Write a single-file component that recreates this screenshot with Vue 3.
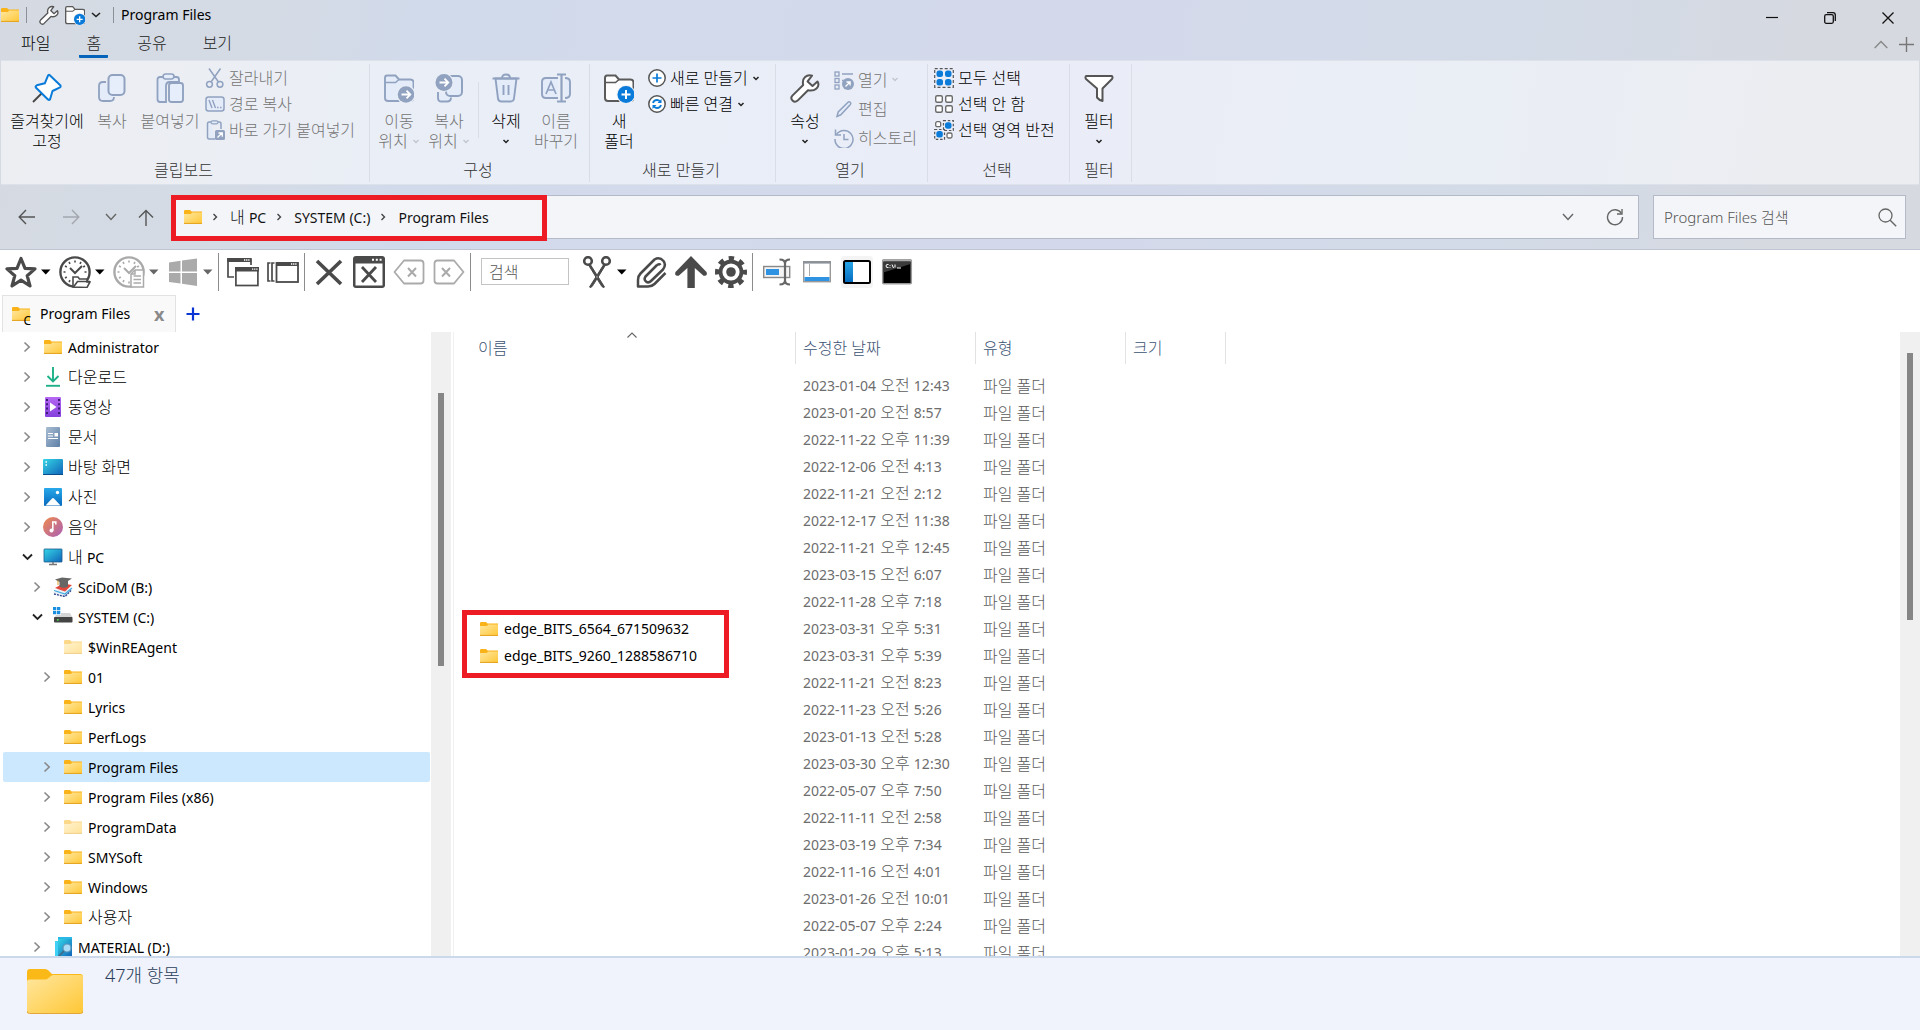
<script setup>
import { h, ref } from 'vue'

const FOLDER =
  '<path d="M0 2.2Q0 1 1.2 1H6l1.6 1.6H18V6H0z" fill="#f9b218"/><path d="M0 5h7l1-1.4h10V14q0 1-1 1H1q-1 0-1-1z" fill="url(#gFolder)"/><path d="M0 14.4h18" stroke="#e3a11f" stroke-width="1"/>'
const WRENCH =
  '<path d="M27.5 8.5 22.5 13 17.6 8.4 22 2.6C17 1 11.5 5 13.2 12L2.4 22.6C-.6 26 4 30.800 7.600 27.600L18 17.200C25 19 30.500 13.500 27.500 8.500z" fill="#fff" stroke="#555" stroke-width="2" stroke-linejoin="round"/>'
const CLOCK = (c) =>
  `<circle cx="16" cy="16" r="14.600" fill="none" stroke="${c}" stroke-width="2.400"/><path d="M16 4.500v2M16 25.500v2M4.500 16h2M25.500 16h2M10 6l1 1.800M22 6l-1 1.800M6 10l1.800 1M26 10l-1.800 1M6 22l1.800-1M10 26l1-1.800" stroke="${c}" stroke-width="1.600"/><path d="M11 12l5 5 7-7" fill="none" stroke="${c}" stroke-width="2"/>`
const NEWFOLDER =
  '<path d="M3 2.500h8.500l3.500 4h11.500q3 0 3 3V25q0 3-3 3H4q-3 0-3-3V5q0-2.500 2-2.500z" fill="#fdfdfd" stroke="#5a5a5a" stroke-width="2"/><path d="M1 9.500h10.500l3.500-3" fill="none" stroke="#5a5a5a" stroke-width="1.600"/><circle cx="22" cy="21.500" r="9.500" fill="#edf0f7"/><circle cx="22" cy="21.500" r="8.500" fill="#0a7bd8"/><path d="M22 17v9M17.500 21.500h9" stroke="#fff" stroke-width="2"/>'

const icons = {
  folder: [18, 16, FOLDER],
  folderPale: [18, 16, `<g opacity=".5">${FOLDER}</g>`],
  folderBig: [56, 45, '<path d="M0 3Q0 0 3 0h15q2 0 3.500 1.500L25 5h28q3 0 3 3v8H0z" fill="#fbb917"/><path d="M0 13q0-2.500 2.500-2.500H18q2 0 3.500-1.500L24 7q1-1 2.500-1H54q2 0 2 2v34q0 2.500-2.500 2.500h-51Q0 44.500 0 42z" fill="url(#gFolder)"/><path d="M0 42q0 2.500 2.500 2.500h51Q56 44.500 56 42" fill="none" stroke="#e3a63a" stroke-width="1"/>'],
  wrenchS: [30, 30, WRENCH],
  newFolder: [30, 30, NEWFOLDER],
  chevS: [8, 5, '<path d="M1.500 1l2.500 2.500L6.500 1" fill="none" stroke="#222" stroke-width="1.500"/>'],
  chevPale: [8, 5, '<path d="M1.500 1l2.500 2.500L6.500 1" fill="none" stroke="#c3c6cc" stroke-width="1.400"/>'],
  chevTitle: [10, 6, '<path d="M1 1l4 3.500L9 1" fill="none" stroke="#222" stroke-width="1.600"/>'],
  min: [12, 12, '<path d="M0 5.500h12" stroke="#111" stroke-width="1.200"/>'],
  restore: [12, 12, '<rect x=".7" y="2.700" width="8.600" height="8.600" rx="1.500" fill="none" stroke="#111" stroke-width="1.300"/><path d="M3 .7h6Q11.300.7 11.300 3v6" fill="none" stroke="#111" stroke-width="1.300"/>'],
  close: [12, 12, '<path d="M.5.5l11 11M11.500.5l-11 11" stroke="#111" stroke-width="1.300"/>'],
  caretUp: [14, 9, '<path d="M.7 8 7 1.500 13.300 8" fill="none" stroke="#888" stroke-width="1.400"/>'],
  plusThin: [15, 15, '<path d="M7.500 0v15M0 7.500h15" stroke="#777" stroke-width="1.400"/>'],
  pin: [30, 30, '<path d="M10.500 19.500 1 29" stroke="#444" stroke-width="1.800"/><path d="M17.500 2 28.500 12.500q.6 2-1.500 2.300l-6.500 3.200-2.500 8.500q-1 .8-2 0L3.800 14.500q-.6-1.500 1-2.200l8-2L16 2.600q.7-1.200 1.500-.6z" fill="#fff" stroke="#0a7bd8" stroke-width="2" stroke-linejoin="round"/>'],
  copy: [28, 30, '<path d="M8 9H5Q1 9 1 13v11q0 4 4 4h7q4 0 4-4" fill="#e4ebf9" stroke="#90a2c0" stroke-width="1.800"/><rect x="10.500" y="2" width="16" height="20" rx="4" fill="#e7eefb" stroke="#90a2c0" stroke-width="2"/>'],
  paste: [28, 30, '<path d="M9 4H4Q1.500 4 1.500 6.500V26Q1.500 29 4 29h6V13q0-3.500 3-4h10V6.500Q23 4 20.500 4H16" fill="#e4ebf9" stroke="#90a2c0" stroke-width="1.800"/><rect x="7" y="1" width="11" height="5" rx="2.500" fill="#e7eefb" stroke="#90a2c0" stroke-width="1.700"/><rect x="13" y="10" width="14" height="19" rx="2.500" fill="#e7eefb" stroke="#90a2c0" stroke-width="1.900"/>'],
  cut: [20, 20, '<path d="M4 .5 13.500 14M15.500.5 6 14" stroke="#90a2c0" stroke-width="1.500"/><circle cx="4.500" cy="16.300" r="2.900" fill="none" stroke="#90a2c0" stroke-width="1.500"/><circle cx="15" cy="16.300" r="2.900" fill="none" stroke="#90a2c0" stroke-width="1.500"/>'],
  path: [20, 20, '<rect x="1" y="3" width="18" height="14" rx="2.500" fill="#e4ebf9" stroke="#90a2c0" stroke-width="1.500"/><path d="M4 6l3 8M7.500 6l3 8M12 13.500h1.500M15 13.500h1.500" stroke="#90a2c0" stroke-width="1.400"/>'],
  shortcut: [20, 20, '<path d="M6 2H4Q2.500 2 2.500 4v13q0 2 1.500 2h6M13 2h1.500Q16 2 16 4v5" fill="#e4ebf9" stroke="#90a2c0" stroke-width="1.500"/><rect x="6" y=".8" width="7" height="3" rx="1.500" fill="#e4ebf9" stroke="#90a2c0" stroke-width="1.200"/><rect x="10" y="10" width="10" height="10" rx="1.500" fill="#90a2c0"/><path d="M12.500 17.500l4.500-4.500M13.500 13h3.800v3.800" stroke="#fff" stroke-width="1.300" fill="none"/>'],
  moveTo: [30, 30, '<path d="M3 2.500h8.500l3.500 4h11.500q3 0 3 3V25q0 3-3 3H4q-3 0-3-3V5q0-2.500 2-2.500z" fill="#e4ebf9" stroke="#90a2c0" stroke-width="1.900"/><path d="M1 9.500h10.500l3.500-3" fill="none" stroke="#90a2c0" stroke-width="1.500"/><circle cx="22" cy="21.500" r="9.500" fill="#eaeef6"/><circle cx="22" cy="21.500" r="8.300" fill="#90a2c0"/><path d="M17.500 21.500h8.500M22.500 17.700l3.800 3.800-3.800 3.800" fill="none" stroke="#fff" stroke-width="1.800"/>'],
  copyTo: [30, 30, '<path d="M4 19v6q0 3.500 3.500 3.500H13q4 0 4-4" fill="#e4ebf9" stroke="#90a2c0" stroke-width="1.900"/><rect x="12" y="3" width="16" height="20" rx="4" fill="#e4ebf9" stroke="#90a2c0" stroke-width="2"/><circle cx="10" cy="9.500" r="9.700" fill="#eaeef6"/><circle cx="10" cy="9.500" r="8.500" fill="#90a2c0"/><path d="M5.500 9.500H14M10.500 5.700l3.800 3.800-3.800 3.800" fill="none" stroke="#fff" stroke-width="1.800"/>'],
  trash: [30, 30, '<path d="M4.500 5.500h21l-2.500 20q-.4 3-3.500 3h-9q-3.100 0-3.500-3z" fill="#e4ebf9" stroke="#90a2c0" stroke-width="1.900"/><path d="M1.500 5.500h27M11 5q0-3.500 4-3.500T19 5M12.500 12v10M17.500 12v10" fill="none" stroke="#90a2c0" stroke-width="1.900"/>'],
  rename: [30, 30, '<path d="M17 5H5Q1 5 1 9v12q0 4 4 4h12M24 5q5 0 5 4v12q0 4-5 4" fill="#e4ebf9" stroke="#90a2c0" stroke-width="1.900"/><path d="M5 21l5-12 5 12M7 17h6.500" fill="none" stroke="#90a2c0" stroke-width="1.700"/><path d="M20.500 1.500v27M16 1.500h9M16 28.500h9" stroke="#90a2c0" stroke-width="2.200"/>'],
  plusCircle: [18, 18, '<circle cx="9" cy="9" r="8.200" fill="#fff" stroke="#555" stroke-width="1.500"/><path d="M9 4.500v9M4.500 9h9" stroke="#0a7bd8" stroke-width="1.700"/>'],
  sync: [18, 18, '<circle cx="9" cy="9" r="8.200" fill="#fff" stroke="#555" stroke-width="1.500"/><path d="M5 8q.8-3 4-3 1.800 0 3 1.300M13 10q-.8 3-4 3-1.800 0-3-1.300" fill="none" stroke="#0a7bd8" stroke-width="1.800"/><path d="M13.500 4v4h-4zM4.500 14v-4h4z" fill="#0a7bd8"/>'],
  open: [20, 20, '<rect x="1" y="2" width="4" height="4" fill="none" stroke="#90a2c0" stroke-width="1.300"/><rect x="1" y="8.500" width="4" height="4" fill="none" stroke="#90a2c0" stroke-width="1.300"/><rect x="1" y="15" width="4" height="4" fill="none" stroke="#90a2c0" stroke-width="1.300"/><path d="M8 4h11M8 10.500h1.500" stroke="#90a2c0" stroke-width="1.700"/><circle cx="14" cy="14" r="6" fill="#90a2c0"/><path d="M11.500 16.500l4.500-4.500M12.500 12h3.600v3.600" fill="none" stroke="#fff" stroke-width="1.300"/>'],
  edit: [20, 20, '<path d="M3 17.500l1.200-4.500L14 3.200q1-1 2.200.1t.2 2.300L6.800 15.800z" fill="#e4ebf9" stroke="#90a2c0" stroke-width="1.500"/>'],
  history: [20, 20, '<path d="M2.500 6.500A9 9 0 1 1 1 11" fill="none" stroke="#90a2c0" stroke-width="1.500"/><path d="M1.500 1.500v5.500H7M10 6v5.500h4.500" fill="none" stroke="#90a2c0" stroke-width="1.500"/>'],
  selAll: [20, 20, '<rect x=".7" y=".7" width="18.600" height="18.600" fill="none" stroke="#555" stroke-width="1.200" stroke-dasharray="3 2"/><g fill="#0a7bd8"><rect x="2.500" y="2.500" width="6.500" height="6.500" rx="2.500"/><rect x="11" y="2.500" width="6.500" height="6.500" rx="2.500"/><rect x="2.500" y="11" width="6.500" height="6.500" rx="2.500"/><rect x="11" y="11" width="6.500" height="6.500" rx="2.500"/></g>'],
  selNone: [20, 20, '<g fill="#fff" stroke="#6a6a6a" stroke-width="1.400"><rect x="1.700" y="1.700" width="6.600" height="6.600" rx="1.500"/><rect x="11.700" y="1.700" width="6.600" height="6.600" rx="1.500"/><rect x="1.700" y="11.700" width="6.600" height="6.600" rx="1.500"/><rect x="11.700" y="11.700" width="6.600" height="6.600" rx="1.500"/></g>'],
  selInv: [20, 20, '<g fill="#fff" stroke="#6a6a6a" stroke-width="1.300"><rect x="1.700" y="1.700" width="5" height="5" rx="1.500"/><rect x="13" y="13" width="5" height="5" rx="1.500"/></g><g fill="none" stroke="#555" stroke-width="1.200" stroke-dasharray="2.500 1.800"><rect x="9.500" y=".7" width="9.800" height="9.800"/><rect x=".7" y="9.500" width="9.800" height="9.800"/></g><rect x="11" y="2.300" width="6.500" height="6.500" rx="2.500" fill="#0a7bd8"/><rect x="2.300" y="11" width="6.500" height="6.500" rx="2.500" fill="#0a7bd8"/>'],
  filter: [30, 30, '<path d="M2 3h26q1 1.500 0 3L18.500 15.500V28q-3-.5-5.500-3.500v-9L2 6Q1 4.500 2 3z" fill="#fff" stroke="#555" stroke-width="2" stroke-linejoin="round"/>'],
  back: [18, 16, '<path d="M17 8H1.500M8 1 1.200 8 8 15" fill="none" stroke="#555" stroke-width="1.400"/>'],
  forward: [18, 16, '<path d="M1 8h15.500M10 1l6.800 7L10 15" fill="none" stroke="#a3a7ae" stroke-width="1.400"/>'],
  down: [12, 8, '<path d="M1 1l5 5.500L11 1" fill="none" stroke="#666" stroke-width="1.400"/>'],
  up: [16, 17, '<path d="M8 17V1.500M1 8.500l7-7 7 7" fill="none" stroke="#555" stroke-width="1.400"/>'],
  crumb: [8, 10, '<path d="M2.500 2l3 3-3 3" fill="none" stroke="#444" stroke-width="1.400"/>'],
  refresh: [18, 18, '<path d="M15.500 5.500A7.500 7.500 0 1 0 16.500 9" fill="none" stroke="#666" stroke-width="1.400"/><path d="M16 1v5h-5" fill="none" stroke="#666" stroke-width="1.400"/>'],
  search: [19, 19, '<circle cx="7.500" cy="7.500" r="6.500" fill="none" stroke="#666" stroke-width="1.300"/><path d="M12.200 12.200l6 6" stroke="#666" stroke-width="1.400"/>'],
  star: [32, 32, '<path d="M16 2.500l4 9.800 10 .6-7.800 6.800L25 30l-9-5.800L7 30l2.800-10.300L2 12.900l10-.6z" fill="none" stroke="#4a4a4a" stroke-width="3.200" stroke-linejoin="round"/>'],
  clockFolder: [32, 32, CLOCK('#4a4a4a') + '<path d="M14 31V21h5l1.500 2H28v3h3l-3 5.500z" fill="#fff" stroke="#4a4a4a" stroke-width="1.600"/><path d="M14.500 31l4-5.500H31" fill="none" stroke="#4a4a4a" stroke-width="1.600"/>'],
  clockDoc: [32, 32, CLOCK('#aaa') + '<path d="M18 31V18l4-4h8.500v17z" fill="#fff" stroke="#aaa" stroke-width="1.500"/><path d="M20.500 20H28M20.500 23.500H28M20.500 27H28M22 14v4h-4" fill="none" stroke="#aaa" stroke-width="1.500"/>'],
  win: [32, 32, '<path d="M2 6.500l11.500-1.700v10.700H2zM15 4.600 30 2.500v13H15zM2 17h11.500v10.600L2 26zM15 17h15v13l-15-2.200z" fill="#aaa"/>'],
  tri: [10, 6, '<path d="M0 .5h9.500L4.750 5.500z" fill="#000"/>'],
  triGray: [10, 6, '<path d="M0 .5h9.500L4.750 5.500z" fill="#666"/>'],
  cascade: [32, 32, '<path d="M7 21H1V3h23v6" fill="none" stroke="#4a4a4a" stroke-width="1.700"/><path d="M.2 2h24v4H.2zM8 11h24v4.500H8z" fill="#4a4a4a"/><rect x="8.900" y="12" width="22" height="17.500" fill="none" stroke="#4a4a4a" stroke-width="1.700"/><path d="M17 4h5.500M25 13.200h5.500" stroke="#fff" stroke-width="1.300" stroke-dasharray="1.300 .8"/>'],
  stackWin: [32, 32, '<path d="M3.500 7H1v18h2.500M7.500 7H5v18h2.500" fill="none" stroke="#4a4a4a" stroke-width="1.700"/><rect x="9.500" y="7" width="21.500" height="19" fill="none" stroke="#4a4a4a" stroke-width="1.800"/><path d="M9 6h22.500v4H9z" fill="#4a4a4a"/><path d="M24 8h6" stroke="#fff" stroke-width="1.300" stroke-dasharray="1.300 .8"/>'],
  cross: [32, 32, '<path d="M4 5l24 23M28 5 4 28" stroke="#4a4a4a" stroke-width="3.600"/>'],
  crossBox: [32, 32, '<path d="M3 0h26q3 0 3 3v26q0 3-3 3H3q-3 0-3-3V3q0-3 3-3z" fill="#4a4a4a"/><rect x="2.500" y="7.500" width="27" height="22" fill="#fff"/><path d="M9 11l14 15M23 11 9 26" stroke="#4a4a4a" stroke-width="2.800"/><path d="M19 3.800h11" stroke="#fff" stroke-width="2" stroke-dasharray="2 1.800"/>'],
  delLeft: [32, 32, '<path d="M11 4.500h16.500q3 0 3 3v17q0 3-3 3H11L1.500 16z" fill="none" stroke="#aaa" stroke-width="1.800" stroke-linejoin="round"/><path d="M15 12l8 8.500M23 12l-8 8.500" stroke="#aaa" stroke-width="2"/>'],
  delRight: [32, 32, '<path d="M21 4.500H4.500q-3 0-3 3v17q0 3 3 3H21L30.500 16z" fill="none" stroke="#aaa" stroke-width="1.800" stroke-linejoin="round"/><path d="M9 12l8 8.500M17 12l-8 8.500" stroke="#aaa" stroke-width="2"/>'],
  scissors: [32, 32, '<circle cx="7" cy="5" r="3.800" fill="none" stroke="#4a4a4a" stroke-width="2.600"/><circle cx="25" cy="5" r="3.800" fill="none" stroke="#4a4a4a" stroke-width="2.600"/><path d="M9 8l14.500 23-.5.500q-2 0-3.500-3L7.500 9zM23 8 8.500 31l.5.500q2 0 3.500-3L24.500 9z" fill="#4a4a4a" stroke="#4a4a4a" stroke-width="1"/>'],
  clip: [32, 32, '<path d="M22 9 10.500 20.500q-2 3 .5 5t5-.5L28 13.500q3.500-4.500.5-8.500-4-4.500-9-1.500L5.500 17.500Q3 20 3 24v6.500h10q4 0 6.500-2.500L30.500 17M22 9q2.500-1.500 3.500 0" fill="none" stroke="#4a4a4a" stroke-width="2.500" stroke-linejoin="round"/>'],
  arrowUp: [32, 32, '<path d="M16 0 31.500 16q1.500 4-3 3.800L19.800 12v20h-7.400V12l-8.700 7.800Q-1 20 .5 16z" fill="#4a4a4a"/>'],
  gear: [32, 32, '<circle cx="16" cy="16" r="13.500" fill="none" stroke="#4a4a4a" stroke-width="5" stroke-dasharray="5.300 5.300" stroke-dashoffset="2.650"/><circle cx="16" cy="16" r="10.500" fill="none" stroke="#4a4a4a" stroke-width="3.800"/><circle cx="16" cy="16" r="4.800" fill="#4a4a4a"/>'],
  renameBar: [32, 32, '<rect x="2.700" y="10.500" width="26" height="11" fill="#f4f4f4" stroke="#888" stroke-width="1.400"/><rect x="5" y="13" width="13" height="6" fill="#2f93e2"/><path d="M18.500 3.500q5.500 0 5.500 4v17q0 4-5.500 4M29 3.500q-5 0-5 4v17q0 4 5 4" fill="none" stroke="#666" stroke-width="2.200"/>'],
  panelBottom: [32, 32, '<rect x="2.700" y="5.700" width="26.600" height="20" fill="#fff" stroke="#999" stroke-width="1.400"/><path d="M2 6.300h28" stroke="#8d9299" stroke-width="2.600"/><path d="M8.500 8v12" stroke="#aaa"/><rect x="3.500" y="21" width="25" height="4" fill="#2f93e2"/>'],
  panelLeft: [32, 32, '<rect width="32" height="32" rx="3" fill="#f4f4f4"/><rect x="3" y="5" width="26" height="22" rx="1.500" fill="#fff"/><rect x="3" y="5" width="9" height="22" fill="url(#gBlue)"/><rect x="3" y="5" width="26" height="22" rx="1.500" fill="none" stroke="#000" stroke-width="2"/>'],
  cmd: [32, 32, '<rect x="1.700" y="3.700" width="28.600" height="24" rx="1" fill="#000" stroke="#9a9a9a" stroke-width="1.500"/><path d="M2 4.500h28" stroke="#aaa" stroke-width="2"/><path d="M2.500 16.500 29.500 8V6h-27z" fill="#3a3a3a"/><path d="M7.500 8.500Q5 8 5 10t2.500 1.500M9 9v.8M9 11v.8M11 8.500l1.500 3.500M14 8.500v3M16 12h4" fill="none" stroke="#fff" stroke-width="1"/>'],
  addBlue: [14, 14, '<path d="M7 .5v13M.5 7h13" stroke="#0c35d6" stroke-width="2.200"/>'],
  right: [8, 12, '<path d="M1.500 1.500 6.200 6l-4.700 4.500" fill="none" stroke="#888" stroke-width="1.600"/>'],
  expanded: [11, 8, '<path d="M1 1.500l4.500 4.500L10 1.500" fill="none" stroke="#222" stroke-width="1.800"/>'],
  sort: [10, 6, '<path d="M.5 5.500 5 1l4.500 4.500" fill="none" stroke="#666" stroke-width="1.100"/>'],
  download: [20, 20, '<path d="M10 0v14M4.500 9l5.500 5.500L15.500 9" fill="none" stroke="#1fb08a" stroke-width="1.900"/><path d="M3 18.800h14" stroke="#1fb08a" stroke-width="1.900"/>'],
  video: [20, 20, '<rect x="2" width="16" height="20" rx="1" fill="url(#gPurple)"/><path d="M4 2v17M16 2v17" stroke="#3b1d78" stroke-width="2" stroke-dasharray="2 2.300"/><path d="M7 5.500v9l6.500-4.500z" fill="#fff"/>'],
  doc: [20, 20, '<rect x="3" width="14" height="20" rx="1" fill="url(#gDoc)"/><path d="M5 6.500h5M5 9h5M5 11.500h10" stroke="#fff" stroke-width="1.200"/><rect x="11.500" y="6" width="3.500" height="3.500" fill="#fff"/>'],
  desktop: [20, 20, '<rect y="2" width="20" height="16" rx="1" fill="url(#gCyan)"/><path d="M2.500 5h1.500M2.500 8h1.500" stroke="#fff" stroke-width="1.600"/><path d="M0 17.500h20" stroke="#0a4d8c"/>'],
  photo: [20, 20, '<rect x="1" y="1" width="18" height="18" rx="1" fill="url(#gBlue)"/><path d="M2.500 18.500 9 11.500q1-1 2 0l6.500 7z" fill="#fff"/><circle cx="14.500" cy="5.500" r="1.700" fill="#fff"/>'],
  music: [20, 20, '<circle cx="10" cy="10" r="10" fill="url(#gMusic)"/><circle cx="8.500" cy="13.500" r="2" fill="#fff"/><path d="M9.800 13.500V5h3v2.500" fill="none" stroke="#fff" stroke-width="1.600"/>'],
  pc: [20, 20, '<rect x="1" y="2" width="18" height="13" rx=".5" fill="url(#gCyan)" stroke="#1d5b8c" stroke-width=".8"/><path d="M10 15v2.500M6 17.500h8" stroke="#777" stroke-width="1.500"/>'],
  books: [20, 20, '<path d="M0 16l13 4 6-7-12-3z" fill="#e9eef5"/><path d="M1 17l11 2.500 6-6" fill="none" stroke="#27418c" stroke-width="1.300" stroke-dasharray="2 1"/><path d="M2 11l10 3.500 7-6.500-9-1.500z" fill="#e2483c"/><path d="M1 13.500l11 3.500 7-6" fill="none" stroke="#41aadf" stroke-width="1.300"/><path d="M2 2.500 9 .5l10 1-4 2.500v5.500q-4 2.500-8.500 0V5z" fill="#666"/><path d="M5 3.500v4.500" stroke="#e0a020"/>'],
  drive: [20, 20, '<path d="M0 0h3.300v3.300H0zM4 0h3.300v3.300H4zM0 4h3.300v3.300H0zM4 4h3.300v3.300H4z" fill="#1a8fe0"/><path d="M8 6h9l2.500 4.500H1.500L3 8h5z" fill="#d5d5d5"/><rect x="1" y="10" width="18.500" height="5.500" rx=".8" fill="#444"/><rect x="4" y="12" width="1.600" height="1.600" fill="#4be04b"/>'],
  material: [20, 20, '<path d="M5 0h14v16H5z" fill="#2ab8e8"/><path d="M2 4h14v16H2z" fill="#41d0f5"/><path d="M5 2h14v18H5z" fill="url(#gCyan)"/><circle cx="14" cy="11" r="4" fill="#a9dcf7" stroke="#5d95b8" stroke-width="1.200"/><path d="M11 14l-6 6" stroke="#3f6f8f" stroke-width="1.800"/>'],
}

const Icon = ({ name, size }) => {
  const [w, ht, body] = icons[name]
  return h('svg', {
    width: size || w,
    height: size ? Math.round((size * ht) / w) : ht,
    viewBox: `0 0 ${w} ${ht}`,
    'aria-hidden': 'true',
    innerHTML: body,
  })
}
Icon.props = ['name', 'size']

const tabs = ['파일', '홈', '공유', '보기']

const groups = [
  {
    id: 'clipboard', label: '클립보드',
    big: [
      { icon: 'pin', lines: ['즐겨찾기에', '고정'], w: 'w76' },
      { icon: 'copy', lines: ['복사'], w: 'w54', off: true },
      { icon: 'paste', lines: ['붙여넣기'], w: 'w62', off: true },
    ],
    small: [
      { icon: 'cut', text: '잘라내기', off: true },
      { icon: 'path', text: '경로 복사', off: true },
      { icon: 'shortcut', text: '바로 가기 붙여넣기', off: true },
    ],
  },
  {
    id: 'organize', label: '구성',
    big: [
      { icon: 'moveTo', lines: ['이동', '위치'], w: 'w50', off: true, inline: true },
      { icon: 'copyTo', lines: ['복사', '위치'], w: 'w50', off: true, inline: true, rule: true },
      { icon: 'trash', lines: ['삭제'], w: 'w50', chev: true },
      { icon: 'rename', lines: ['이름', '바꾸기'], w: 'w50', off: true },
    ],
  },
  {
    id: 'create', label: '새로 만들기',
    big: [{ icon: 'newFolder', lines: ['새', '폴더'], w: 'w54' }],
    small: [
      { icon: 'plusCircle', text: '새로 만들기', chev: 'chevS' },
      { icon: 'sync', text: '빠른 연결', chev: 'chevS' },
    ],
  },
  {
    id: 'open', label: '열기',
    big: [{ icon: 'wrenchS', lines: ['속성'], w: 'w54', chev: true }],
    small: [
      { icon: 'open', text: '열기', off: true, chev: 'chevPale' },
      { icon: 'edit', text: '편집', off: true },
      { icon: 'history', text: '히스토리', off: true },
    ],
  },
  {
    id: 'select', label: '선택',
    small: [
      { icon: 'selAll', text: '모두 선택' },
      { icon: 'selNone', text: '선택 안 함' },
      { icon: 'selInv', text: '선택 영역 반전' },
    ],
  },
  { id: 'filter', label: '필터', big: [{ icon: 'filter', lines: ['필터'], w: 'w54', chev: true }] },
]

const crumbs = [
  { ko: '내', en: 'PC' },
  { en: 'SYSTEM (C:)' },
  { en: 'Program Files' },
]

const toolsA = [
  { icon: 'star', drop: 'tri', name: '즐겨찾기' },
  { icon: 'clockFolder', drop: 'tri', name: '최근 폴더' },
  { icon: 'clockDoc', drop: 'triGray', name: '최근 파일' },
  { icon: 'win', drop: 'triGray', name: 'Windows' },
  { sep: true },
  { icon: 'cascade', name: '창 복제' },
  { icon: 'stackWin', name: '창 목록' },
  { sep: true },
  { icon: 'cross', name: '닫기' },
  { icon: 'crossBox', name: '모두 닫기' },
  { icon: 'delLeft', name: '왼쪽 닫기' },
  { icon: 'delRight', name: '오른쪽 닫기' },
  { sep: true },
]
const toolsB = [
  { icon: 'scissors', drop: 'tri', name: '잘라내기' },
  { icon: 'clip', name: '첨부' },
  { icon: 'arrowUp', name: '위로' },
  { icon: 'gear', name: '설정' },
  { sep: true },
  { icon: 'renameBar', name: '이름 바꾸기' },
  { icon: 'panelBottom', name: '세부 정보 창' },
  { icon: 'panelLeft', name: '탐색 창' },
  { icon: 'cmd', name: '명령 프롬프트' },
]

const tree = [
  { level: 0, icon: 'folder', en: 'Administrator', arrow: 'right' },
  { level: 0, icon: 'download', ko: '다운로드', arrow: 'right' },
  { level: 0, icon: 'video', ko: '동영상', arrow: 'right' },
  { level: 0, icon: 'doc', ko: '문서', arrow: 'right' },
  { level: 0, icon: 'desktop', ko: '바탕 화면', arrow: 'right' },
  { level: 0, icon: 'photo', ko: '사진', arrow: 'right' },
  { level: 0, icon: 'music', ko: '음악', arrow: 'right' },
  { level: 0, icon: 'pc', ko: '내', en: 'PC', arrow: 'expanded' },
  { level: 1, icon: 'books', en: 'SciDoM (B:)', arrow: 'right' },
  { level: 1, icon: 'drive', en: 'SYSTEM (C:)', arrow: 'expanded' },
  { level: 2, icon: 'folderPale', en: '$WinREAgent' },
  { level: 2, icon: 'folder', en: '01', arrow: 'right' },
  { level: 2, icon: 'folder', en: 'Lyrics' },
  { level: 2, icon: 'folder', en: 'PerfLogs' },
  { level: 2, icon: 'folder', en: 'Program Files', arrow: 'right', current: true },
  { level: 2, icon: 'folder', en: 'Program Files (x86)', arrow: 'right' },
  { level: 2, icon: 'folderPale', en: 'ProgramData', arrow: 'right' },
  { level: 2, icon: 'folder', en: 'SMYSoft', arrow: 'right' },
  { level: 2, icon: 'folder', en: 'Windows', arrow: 'right' },
  { level: 2, icon: 'folder', ko: '사용자', arrow: 'right' },
  { level: 1, icon: 'material', en: 'MATERIAL (D:)', arrow: 'right' },
]

const files = [
  ['2023-01-04', '오전', '12:43'],
  ['2023-01-20', '오전', '8:57'],
  ['2022-11-22', '오후', '11:39'],
  ['2022-12-06', '오전', '4:13'],
  ['2022-11-21', '오전', '2:12'],
  ['2022-12-17', '오전', '11:38'],
  ['2022-11-21', '오후', '12:45'],
  ['2023-03-15', '오전', '6:07'],
  ['2022-11-28', '오후', '7:18'],
  ['2023-03-31', '오후', '5:31', 'edge_BITS_6564_671509632'],
  ['2023-03-31', '오후', '5:39', 'edge_BITS_9260_1288586710'],
  ['2022-11-21', '오전', '8:23'],
  ['2022-11-23', '오전', '5:26'],
  ['2023-01-13', '오전', '5:28'],
  ['2023-03-30', '오후', '12:30'],
  ['2022-05-07', '오후', '7:50'],
  ['2022-11-11', '오전', '2:58'],
  ['2023-03-19', '오후', '7:34'],
  ['2022-11-16', '오전', '4:01'],
  ['2023-01-26', '오전', '10:01'],
  ['2022-05-07', '오후', '2:24'],
  ['2023-01-29', '오후', '5:13'],
]

const toolQuery = ref('')
const query = ref('')
</script>

<template>
  <div class="window">
    <svg class="defs" aria-hidden="true">
      <defs>
        <linearGradient id="gFolder" x1="0" y1="0" x2="1" y2="1"><stop offset="0" stop-color="#ffe7a0" /><stop offset="1" stop-color="#ffc735" /></linearGradient>
        <linearGradient id="gBlue" x1="0" y1="0" x2="0" y2="1"><stop offset="0" stop-color="#28a8ea" /><stop offset="1" stop-color="#0669bd" /></linearGradient>
        <linearGradient id="gCyan" x1="0" y1="0" x2="1" y2="1"><stop offset="0" stop-color="#35d6e6" /><stop offset="1" stop-color="#0f62b8" /></linearGradient>
        <linearGradient id="gPurple" x1="0" y1="0" x2="0" y2="1"><stop offset="0" stop-color="#b568f2" /><stop offset="1" stop-color="#8440dd" /></linearGradient>
        <linearGradient id="gDoc" x1="0" y1="0" x2="1" y2="1"><stop offset="0" stop-color="#a9bdd3" /><stop offset="1" stop-color="#5d7fa6" /></linearGradient>
        <linearGradient id="gMusic" x1="0" y1="0" x2="1" y2="1"><stop offset="0" stop-color="#f08a4b" /><stop offset="1" stop-color="#a95fb8" /></linearGradient>
      </defs>
    </svg>

    <header class="chrome">
      <div class="titlebar">
        <Icon name="folder" />
        <i class="bar"></i>
        <button class="quick" aria-label="속성"><Icon name="wrenchS" size="20" /></button>
        <button class="quick" aria-label="새 폴더"><Icon name="newFolder" size="20" /></button>
        <button aria-label="빠른 실행"><Icon name="chevTitle" /></button>
        <i class="bar end"></i>
        <h1 class="en">Program Files</h1>
        <div class="controls">
          <button aria-label="최소화"><Icon name="min" /></button>
          <button aria-label="이전 크기로"><Icon name="restore" /></button>
          <button aria-label="닫기"><Icon name="close" /></button>
        </div>
      </div>

      <div class="tabs">
        <button v-for="(t, i) in tabs" :key="t" :class="{ active: i === 1, file: i === 0 }">{{ t }}</button>
        <div class="tab-tools">
          <button aria-label="리본 최소화"><Icon name="caretUp" /></button>
          <button aria-label="추가"><Icon name="plusThin" /></button>
        </div>
      </div>

      <div class="ribbon">
        <section v-for="g in groups" :key="g.id" class="group" :class="g.id">
          <div class="group-body">
            <template v-for="b in g.big" :key="b.icon">
              <button class="big" :class="[b.w, { off: b.off }]">
                <Icon :name="b.icon" />
                <span v-for="(l, i) in b.lines" :key="i" class="line">
                  {{ l }}<Icon v-if="b.inline && i === 1" name="chevPale" class="line-chev" />
                </span>
                <span v-if="b.chev" class="line"><Icon name="chevS" /></span>
              </button>
              <i v-if="b.rule" class="rule"></i>
            </template>
            <div v-if="g.small" class="stack">
              <button v-for="s in g.small" :key="s.text" class="small" :class="{ off: s.off }">
                <Icon :name="s.icon" /><span>{{ s.text }}</span><Icon v-if="s.chev" :name="s.chev" class="small-chev" />
              </button>
            </div>
          </div>
          <h2>{{ g.label }}</h2>
        </section>
      </div>

      <nav class="navbar">
        <button class="nav-btn" aria-label="뒤로"><Icon name="back" /></button>
        <button class="nav-btn" aria-label="앞으로"><Icon name="forward" /></button>
        <button class="nav-btn narrow" aria-label="최근 위치"><Icon name="down" /></button>
        <button class="nav-btn narrow" aria-label="위로"><Icon name="up" /></button>
        <div class="address">
          <Icon name="folder" />
          <template v-for="c in crumbs" :key="c.en">
            <Icon name="crumb" class="crumb-sep" />
            <a href="#"><template v-if="c.ko">{{ c.ko + ' ' }}</template><span class="en">{{ c.en }}</span></a>
          </template>
          <div class="address-tools">
            <button aria-label="이전 위치"><Icon name="down" /></button>
            <button aria-label="새로 고침"><Icon name="refresh" /></button>
          </div>
          <div class="mark mark-path"></div>
        </div>
        <label class="search">
          <input v-model="query" type="text" placeholder="Program Files 검색" aria-label="Program Files 검색" />
          <Icon name="search" />
        </label>
      </nav>
    </header>

    <div class="toolbar">
      <template v-for="(t, i) in toolsA" :key="i">
        <i v-if="t.sep" class="tool-sep"></i>
        <button v-else class="tool" :class="{ drop: t.drop }" :aria-label="t.name"><Icon :name="t.icon" /><Icon v-if="t.drop" :name="t.drop" /></button>
      </template>
      <input v-model="toolQuery" class="tool-input" type="text" placeholder="검색" aria-label="검색" />
      <template v-for="(t, i) in toolsB" :key="i">
        <i v-if="t.sep" class="tool-sep"></i>
        <button v-else class="tool" :class="{ drop: t.drop }" :aria-label="t.name"><Icon :name="t.icon" /><Icon v-if="t.drop" :name="t.drop" /></button>
      </template>
    </div>

    <div class="doc-tabs">
      <div class="doc-tab">
        <span class="tab-icon"><Icon name="folder" /><b>C</b></span>
        <span class="en">Program Files</span>
        <button class="tab-close" aria-label="탭 닫기">x</button>
      </div>
      <button class="tab-add" aria-label="새 탭"><Icon name="addBlue" /></button>
    </div>

    <main class="content">
      <ul class="tree">
        <li v-for="n in tree" :key="n.en || n.ko" :class="{ current: n.current }" :style="{ paddingLeft: 14 + n.level * 10 + 'px' }">
          <span class="arrow"><Icon v-if="n.arrow" :name="n.arrow" /></span>
          <span class="node-icon"><Icon :name="n.icon" /></span>
          <span><template v-if="n.ko">{{ n.ko + ' ' }}</template><span v-if="n.en" class="en">{{ n.en }}</span></span>
        </li>
      </ul>
      <div class="scroll"><div class="thumb tree-thumb"></div></div>

      <section class="list">
        <table>
          <colgroup><col class="c-name" /><col class="c-date" /><col class="c-type" /><col class="c-size" /></colgroup>
          <thead>
            <tr>
              <th>이름<Icon name="sort" class="sort" /></th>
              <th>수정한 날짜</th>
              <th>유형</th>
              <th>크기</th>
            </tr>
          </thead>
          <tbody>
            <tr v-for="(f, i) in files" :key="i">
              <td class="name"><span v-if="f[3]" class="file"><Icon name="folder" /><span class="en">{{ f[3] }}</span></span></td>
              <td><span class="en">{{ f[0] }}</span> {{ f[1] }} <span class="en">{{ f[2] }}</span></td>
              <td>파일 폴더</td>
              <td></td>
            </tr>
          </tbody>
        </table>
        <div class="mark mark-files"></div>
      </section>
      <div class="scroll"><div class="thumb list-thumb"></div></div>
    </main>

    <footer class="status">
      <Icon name="folderBig" />
      <p>47개 항목</p>
    </footer>
  </div>
</template>

<style>
body {
  margin: 0;
  background: #fff;
}
</style>

<style scoped>
.window {
  display: flex;
  flex-direction: column;
  height: 100vh;
  overflow: hidden;
  color: #000;
  font: 300 16px/20px "Noto Sans", "Noto Sans CJK KR", sans-serif;
}
.window * {
  box-sizing: border-box;
}
.defs {
  position: absolute;
  width: 0;
  height: 0;
}
svg {
  display: block;
  flex: none;
}
.en {
  font-size: 14px;
  font-weight: 400;
}
button {
  display: flex;
  align-items: center;
  justify-content: center;
  padding: 0;
  border: 0;
  background: none;
  color: inherit;
  font: inherit;
  white-space: nowrap;
}
h1,
h2,
p,
ul {
  margin: 0;
  padding: 0;
  font-weight: inherit;
}
.chrome {
  flex: none;
  border-bottom: 1px solid #bfc6d3;
  background: linear-gradient(100deg, #d5dae2 0%, #d4dbe5 14%, #d1daeb 22%, #d3d9eb 55%, #d3dbe7 80%, #d6d9e0 92%);
}
.titlebar {
  display: flex;
  align-items: center;
  height: 30px;
  padding-left: 1px;
}
.bar {
  width: 1px;
  height: 16px;
  margin: 0 12px 0 7px;
  background: #8b9099;
}
.bar.end {
  margin: 0 7px 0 12px;
}
.quick {
  margin-right: 6px;
}
.controls {
  display: flex;
  margin-left: auto;
  padding-right: 3px;
}
.controls button {
  width: 58px;
  height: 30px;
  padding-top: 6px;
}
.tabs {
  display: flex;
  gap: 22px;
  height: 30px;
  padding-left: 14px;
}
.tabs > button {
  height: 28px;
  padding: 0 7px;
  border-bottom: 3px solid transparent;
  color: #222;
}
.tabs > .file {
  color: #000;
}
.tabs > .active {
  border-color: #0563b9;
  border-radius: 1px;
}
.tab-tools {
  display: flex;
  gap: 11px;
  margin-left: auto;
  padding: 0 6px 2px 0;
}
.ribbon {
  display: flex;
  margin: 0 1px;
  border: 1px solid #dde1e9;
  border-width: 1px 0;
  background: linear-gradient(100deg, #eceef2 0%, #ebeef4 14%, #e9eef7 25%, #eaedf7 55%, #eaeef4 82%, #ecedf1 94%);
}
.group {
  position: relative;
  display: flex;
  flex-direction: column;
  flex: none;
  padding-bottom: 4px;
}
.group::after {
  content: "";
  position: absolute;
  inset: 3px 0 2px auto;
  width: 1px;
  background: #d8dde6;
}
.group h2 {
  padding-right: 4px;
  color: #333;
  font-size: 16px;
  text-align: center;
}
.group-body {
  display: flex;
  height: 99px;
  padding-left: 4px;
}
.clipboard {
  width: 369px;
}
.clipboard .group-body {
  padding-left: 8px;
}
.organize {
  width: 220px;
}
.create {
  width: 186px;
}
.create .group-body,
.open .group-body,
.filter .group-body {
  padding-left: 2px;
}
.open {
  width: 152px;
}
.select {
  width: 142px;
}
.filter {
  width: 62px;
}
.w76 {
  width: 76px;
}
.w62 {
  width: 62px;
}
.w54 {
  width: 54px;
}
.w50 {
  width: 50px;
}
.big {
  flex-direction: column;
  justify-content: flex-start;
  padding-top: 12px;
  color: #000;
}
.big > svg {
  margin-bottom: 8px;
}
.line {
  display: flex;
  align-items: center;
  height: 20px;
}
.line-chev {
  margin-left: 4px;
}
.rule {
  width: 1px;
  height: 56px;
  margin: 21px 2px 0 4px;
  background: #d8dde6;
}
.stack {
  display: flex;
  flex-direction: column;
  padding: 4px 0 0 2px;
}
.clipboard .stack {
  padding-left: 4px;
}
.small {
  justify-content: flex-start;
  gap: 4px;
  height: 26px;
  color: #000;
}
.big.off,
.small.off {
  color: #747474;
}
.open .small {
  height: 29px;
}
.navbar {
  display: flex;
  align-items: center;
  height: 64px;
  padding: 0 14px 0 5px;
}
.nav-btn {
  width: 44px;
  height: 44px;
}
.nav-btn.narrow {
  width: 35px;
}
.address {
  position: relative;
  display: flex;
  flex: 1;
  align-items: center;
  height: 44px;
  margin: 0 14px 0 8px;
  padding-left: 12px;
  border: 1px solid #b3b9c6;
  background: #f3f5f9;
}
.address a {
  color: #111;
  text-decoration: none;
  white-space: nowrap;
}
.crumb-sep {
  margin: 0 11px 0 9px;
}
.address-tools {
  display: flex;
  margin-left: auto;
}
.address-tools button {
  width: 47px;
}
.search {
  display: flex;
  align-items: center;
  width: 253px;
  height: 44px;
  padding: 0 8px 0 10px;
  border: 1px solid #b3b9c6;
  background: #f4f5f8;
}
.search input {
  flex: 1;
  min-width: 0;
  padding: 0;
  border: 0;
  outline: 0;
  background: none;
  font: inherit;
  font-size: 15px;
}
input::placeholder {
  color: #555;
  opacity: 1;
}
.mark {
  position: absolute;
  border: 5px solid #ed1c24;
  pointer-events: none;
}
.mark-path {
  top: -1px;
  left: -1px;
  width: 376px;
  height: 46px;
}
.toolbar {
  display: flex;
  flex: none;
  align-items: center;
  gap: 8px;
  height: 43px;
  padding-left: 5px;
}
.tool {
  width: 32px;
  height: 32px;
}
.tool.drop {
  gap: 4px;
  width: 46px;
}
.tool-sep {
  width: 1px;
  height: 38px;
  margin-left: -3px;
  background: #8c8c8c;
}
.tool-input {
  width: 88px;
  height: 27px;
  margin: 0 4px 0 2px;
  padding: 0 7px;
  border: 1px solid #c4c4c4;
  border-radius: 0;
  outline: 0;
  background: #fff;
  font: inherit;
}
.doc-tabs {
  display: flex;
  flex: none;
  align-items: flex-end;
  height: 39px;
  padding-left: 2px;
}
.doc-tab {
  display: flex;
  align-items: center;
  height: 37px;
  padding: 0 9px;
  border: 1px solid #e2e2e2;
  border-bottom: 0;
  background: #f9f9f9;
}
.tab-icon {
  position: relative;
  margin-right: 10px;
}
.tab-icon b {
  position: absolute;
  right: -1px;
  bottom: -6px;
  font-size: 12px;
  font-weight: 400;
  line-height: 14px;
}
.tab-close {
  width: 14px;
  margin-left: 22px;
  color: #8a8a8a;
  font-size: 18px;
  font-weight: 700;
}
.tab-add {
  width: 36px;
  height: 36px;
  margin-left: -1px;
}
.content {
  display: flex;
  flex: 1;
  min-height: 0;
}
.tree {
  width: 428px;
  margin: 0 0 0 3px;
  overflow: hidden;
  list-style: none;
}
.tree li {
  display: flex;
  align-items: center;
  width: 427px;
  height: 30px;
  border-radius: 2px;
  white-space: nowrap;
}
.tree .current {
  background: #cce8ff;
}
.arrow,
.node-icon {
  display: flex;
  justify-content: center;
  width: 20px;
}
.node-icon {
  margin: 0 5px 0 6px;
}
.scroll {
  flex: none;
  width: 20px;
  background: #f0f0f0;
}
.thumb {
  width: 6px;
  margin: 0 auto;
  background: #868686;
}
.tree-thumb {
  height: 273px;
  margin-top: 61px;
}
.list-thumb {
  height: 267px;
  margin-top: 21px;
}
.list {
  position: relative;
  flex: 1;
  margin-left: 2px;
  overflow: hidden;
  border-left: 1px solid #f0f0f0;
}
table {
  width: 772px;
  table-layout: fixed;
  border-collapse: separate;
  border-spacing: 0;
}
.c-name {
  width: 342px;
}
.c-date {
  width: 180px;
}
.c-type {
  width: 150px;
}
.c-size {
  width: 100px;
}
th {
  position: relative;
  height: 32px;
  padding: 0 0 0 7px;
  border-right: 1px solid #e2e2e2;
  color: #3b5272;
  font-weight: 300;
  text-align: left;
}
th:first-child {
  padding-left: 24px;
}
.sort {
  position: absolute;
  top: 0;
  left: 173px;
}
tbody::before {
  content: "";
  display: block;
  height: 8px;
}
td {
  height: 27px;
  padding: 0 0 0 7px;
  color: #5c5c5c;
  white-space: nowrap;
}
td .en {
  color: #6d6d6d;
}
td.name {
  padding-left: 26px;
}
td.name .en {
  color: #000;
}
.file {
  display: flex;
  align-items: center;
  gap: 6px;
}
.mark-files {
  top: 278px;
  left: 8px;
  width: 267px;
  height: 68px;
}
.status {
  display: flex;
  flex: none;
  height: 74px;
  padding: 11px 27px 0;
  border-top: 2px solid #cbd9ea;
  background: #f0f3fb;
}
.status p {
  margin: -4px 0 0 22px;
  color: #2b3e59;
  font-size: 18px;
}
</style>
